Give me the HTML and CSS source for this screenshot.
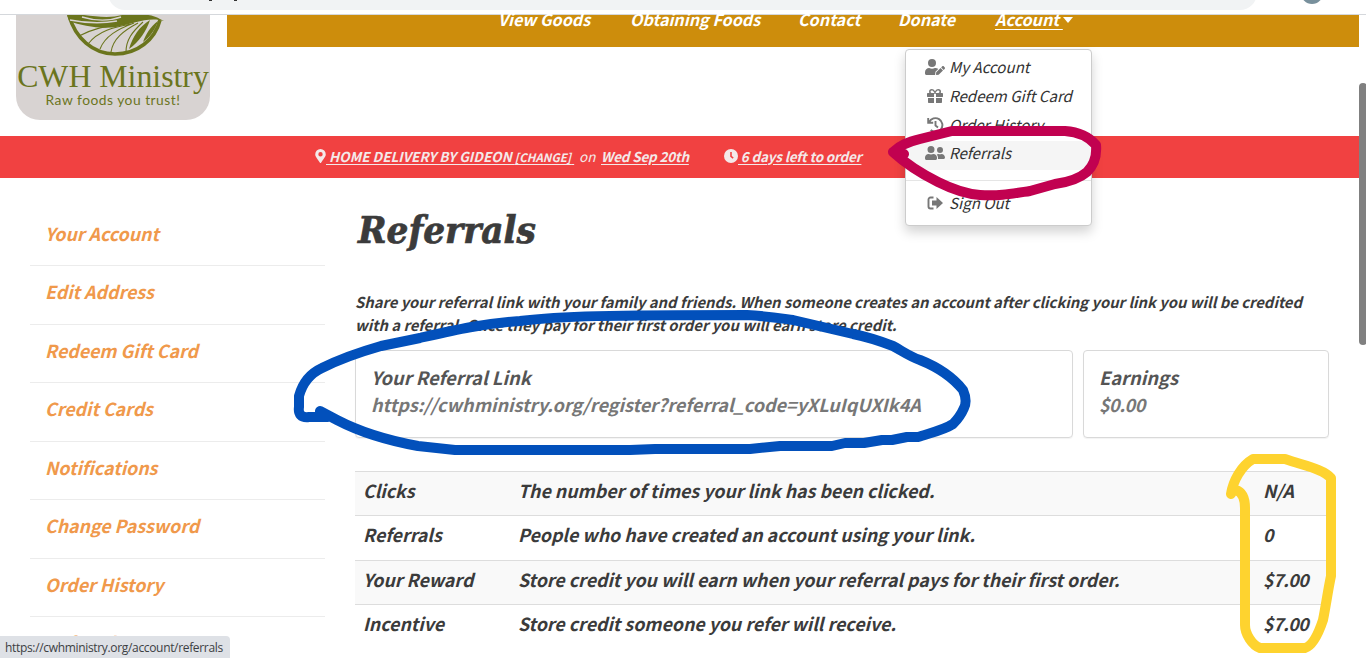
FILE: index.html
```html
<!DOCTYPE html>
<html lang="en">
<head>
  <meta charset="utf-8">
  <title>Referrals - CWH Ministry</title>
  <link rel="stylesheet" href="styles.css">
</head>
<body>
  <div class="browser-bar">
    <div class="address"><i></i><i></i></div>
    <div class="avatar"></div>
  </div>

  <header class="header">
    <div class="logo">
      <svg class="logo-mark" width="194" height="42" viewBox="0 0 194 42" fill="none" stroke="#6b751d">
        <path d="M53 0c6 23 24 39 46 39s40-14 45-34" stroke-width="3.6"/>
        <path d="M51 0h17c14 2 28 3 38 0h14c10-1 17 0 24 4l4 2-5-1c-14-2-27 4-43 7C84 14 66 11 53 6z" fill="#6b751d" stroke="none"/>
        <path d="M54 5c15 3 31 4 47 1M66 2c13 4 28 4 39 0" stroke="#d8d3d2" stroke-width="1.4"/>
        <path d="M63 21C79 12 96 11 110 8M72 29c10-13 26-17 43-20M84 34c5-13 18-20 34-26M95 37c2-13 12-21 27-29M110 37c0-12 6-20 17-30" stroke-width="1.1"/>
        <path d="M113 34c4-13 10-22 21-29-3 10-11 22-21 29zM127 27c3-8 7-15 15-21-3 9-8 16-15 21z" fill="#6b751d" stroke="none"/>
      </svg>
      <div class="logo-name">CWH Ministry</div>
      <div class="logo-tag">Raw foods you trust!</div>
    </div>
    <nav class="nav">
      <a class="nav-goods">View Goods</a>
      <a class="nav-foods">Obtaining Foods</a>
      <a class="nav-contact">Contact</a>
      <a class="nav-donate">Donate</a>
      <a class="nav-account"><u>Account </u><i class="caret"></i></a>
    </nav>
  </header>

  <div class="delivery">
    <svg class="pin" width="11" height="14" viewBox="0 0 384 512" fill="#f4e9e9"><path d="M172 502C27 291 0 270 0 192a192 192 0 0 1 384 0c0 78-27 99-172 310a24 24 0 0 1-40 0zM192 272a80 80 0 1 0 0-160 80 80 0 0 0 0 160z"/></svg>
    <a class="where">&nbsp;HOME DELIVERY BY GIDEON <small>[CHANGE]</small>&nbsp;</a>
    <span class="on">on</span>
    <a class="date">Wed Sep 20th</a>
    <svg class="clock" width="14" height="14" viewBox="0 0 16 16"><circle cx="8" cy="8" r="8" fill="#f4e9e9"/><path d="M8 3.5v5l2.5 2" fill="none" stroke="#f14141" stroke-width="1.8"/></svg>
    <a class="left">&nbsp;6 days left to order</a>
  </div>

  <div class="page">
    <aside class="sidebar">
      <a>Your Account</a>
      <a>Edit Address</a>
      <a>Redeem Gift Card</a>
      <a>Credit Cards</a>
      <a>Notifications</a>
      <a>Change Password</a>
      <a>Order History</a>
      <a>Referrals</a>
    </aside>

    <main class="main">
      <h1>Referrals</h1>
      <p class="intro">
        <span>Share your referral link with your family and friends. When someone creates an account after clicking your link you will be credited</span><br>
        <span>with a referral. Once they pay for their first order you will earn store credit.</span>
      </p>
      <div class="cards">
        <div class="card link-card">
          <h3>Your Referral Link</h3>
          <p>https://cwhministry.org/register?referral_code=yXLuIqUXIk4A</p>
        </div>
        <div class="card earnings-card">
          <h3>Earnings</h3>
          <p class="amount">$0.00</p>
        </div>
      </div>
      <div class="stats">
        <div class="row"><span>Clicks</span><span>The number of times your link has been clicked.</span><span>N/A</span></div>
        <div class="row"><span>Referrals</span><span>People who have created an account using your link.</span><span>0</span></div>
        <div class="row"><span>Your Reward</span><span>Store credit you will earn when your referral pays for their first order.</span><span class="amount">$7.00</span></div>
        <div class="row"><span>Incentive</span><span>Store credit someone you refer will receive.</span><span class="amount">$7.00</span></div>
      </div>
    </main>
  </div>

  <div class="dropdown">
    <a>
      <svg width="20" height="16" viewBox="0 0 640 512"><path d="M224 256a128 128 0 1 0 0-256 128 128 0 0 0 0 256zm89 32c-28 13-58 20-89 20s-61-7-89-20C60 288 0 348 0 422v42c0 26 22 48 48 48h275l12-102 90-90c-28-24-66-32-112-32zM359 425l-7 65c-1 12 8 21 20 20l65-7 139-139-79-79zM633 268l-41-41c-9-9-23-9-32 0l-42 42 79 79 36-37c9-9 9-33 0-43z"/></svg>
      <span>My Account</span>
    </a>
    <a>
      <svg width="20" height="16" viewBox="-64 0 640 512"><path fill-rule="evenodd" d="M32 448c0 18 14 32 32 32h160V320H32zm256 32h160c18 0 32-14 32-32V320H288zm192-320h-42c6-12 10-25 10-40a88 88 0 0 0-88-88c-42 0-69 21-103 69-34-48-61-69-103-69A88 88 0 0 0 66 120c0 15 4 28 10 40H32c-18 0-32 14-32 32v80c0 9 7 16 16 16h208V180h64v108h208c9 0 16-7 16-16v-80c0-18-14-32-32-32zm-326 0a40 40 0 0 1 0-80c22 0 38 4 86 80zm204 0h-86c48-76 64-80 86-80a40 40 0 0 1 0 80z"/></svg>
      <span>Redeem Gift Card</span>
    </a>
    <a>
      <svg class="line-icon" width="20" height="16" viewBox="-2 0 20 16"><path d="M1.200 1v4.800h5M2.200 5.200A6.900 6.900 0 1 1 3.700 13M8.500 4v4.500L11 10.500"/></svg>
      <span>Order History</span>
    </a>
    <a class="active">
      <svg width="20" height="16" viewBox="0 0 640 512"><path d="M192 256a112 112 0 1 0 0-224 112 112 0 0 0 0 224zm77 32c-48 20-106 20-154 0C52 288 0 340 0 403v29c0 26 22 48 48 48h288c26 0 48-22 48-48v-29c0-63-52-115-115-115zm211-32a96 96 0 1 0 0-192 96 96 0 0 0 0 192zm48 32c-34 12-62 12-96 0-20 0-39 6-55 16 24 27 39 61 39 99v45h176c26 0 48-22 48-48 0-62-50-112-112-112z"/></svg>
      <span>Referrals</span>
    </a>
    <hr>
    <a class="sign-out">
      <svg class="line-icon" width="20" height="16" viewBox="-2 0 20 16"><path d="M6.500 2.500H3.500a2 2 0 0 0-2 2v7a2 2 0 0 0 2 2h3"/><path class="arrow" d="M9.500 2 16 8l-6.500 6v-3.500H5v-5h4.500z"/></svg>
      <span>Sign Out</span>
    </a>
  </div>

  <!-- marker strokes drawn over the page -->
  <svg class="marks" width="1366" height="658" viewBox="0 0 1366 658">
    <path stroke="#c10150" d="M904 154 893 152C900 145 908 142 920 139L952 131H1065C1079 132 1090 138 1096 145 1097 156 1094 165 1087 172 1080 178 1070 182 1055 184L1030 191C1010 194 1000 196 980 195C966 194 950 188 938 182 920 173 905 163 893 152"/>
    <path stroke="#0250bb" d="M328 417H309C301 418 298 414 299 407V396C302 385 309 374 322 368C340 359 360 352 381 346L420 338C455 330 480 324 520 321 560 316 610 315 747 315C765 316 778 318 793 320L853 334C868 337 880 341 893 346 904 352 909 356 920 360 940 368 955 380 963 390 966 397 966 404 964 408 961 415 957 420 953 424 944 430 930 433 918 437H907L892 440H882L864 443H845L832 446H780L750 449H655L630 450H455L418 446C385 440 360 432 337 420L320 411"/>
    <path stroke="#fed32f" d="M1231 494C1233 481 1241 466 1253 459H1285C1305 466 1323 469 1331 478V576C1328 590 1326 605 1323 620 1318 635 1312 646 1305 648H1260C1252 645 1245 634 1245 625V508C1245 499 1242 492 1236 490"/>
  </svg>

  <div class="status">https://cwhministry.org/account/referrals</div>
  <div class="scrollbar"></div>
</body>
</html>
```

FILE: styles.css
```css
* {
  margin: 0;
  padding: 0;
  box-sizing: border-box;
}

body {
  position: relative;
  width: 1366px;
  height: 658px;
  overflow: hidden;
  background: #fff;
  color: #3b3b3b;
  font-family: "Noto Sans CJK SC", "Open Sans", sans-serif;
  font-style: italic;
  font-weight: 700;
  font-size: 17.8px;
}

a, span {
  white-space: nowrap;
}

.browser-bar {
  display: flex;
  height: 15px;
  padding-left: 108px;
  border-bottom: 1px solid #d5d8dc;
  overflow: hidden;
}

.address {
  display: flex;
  gap: 22px;
  width: 1149px;
  height: 34px;
  margin-top: -24px;
  padding: 24px 0 0 101px;
  border-radius: 17px;
  background: #f1f3f4;
}

.address i {
  width: 3px;
  height: 1px;
  background: #333;
}

.avatar {
  width: 22px;
  height: 22px;
  margin: -18px 0 0 44px;
  border-radius: 50%;
  background: #78909c;
}

.header {
  display: flex;
  height: 121px;
  padding-left: 16px;
}

.logo {
  width: 194px;
  height: 105px;
  margin-right: 17px;
  border-radius: 0 0 24px 24px;
  background: #d8d3d2;
  color: #6b751d;
  font-style: normal;
  font-weight: 400;
  text-align: center;
  white-space: nowrap;
}

.logo-mark {
  display: block;
}

.logo-name {
  font: 31.8px/39px "Liberation Serif", serif;
}

.logo-tag {
  font: 13.8px/7px Lato, sans-serif;
  letter-spacing: 0.5px;
}

.nav {
  display: flex;
  width: 1132px;
  height: 32px;
  padding-left: 271px;
  background: #cd8d0c;
  color: #fff;
  font-size: 16.2px;
  line-height: 8px;
}

.nav a {
  flex: none;
}

.nav-goods { width: 132px; }
.nav-foods { width: 168px; }
.nav-contact { width: 100px; }
.nav-donate { width: 97px; }

.nav u {
  white-space: pre;
  text-underline-offset: 3px;
}

.caret {
  display: inline-block;
  border: 5.5px solid transparent;
  border-top: 6px solid #fff;
  border-bottom: 0;
  vertical-align: 3px;
}

.delivery {
  display: flex;
  align-items: center;
  width: 1359px;
  height: 42px;
  padding: 0 0 3px 315px;
  background: #f14141;
  color: #f4e9e9;
  font-size: 13.5px;
}

.delivery svg {
  margin-top: 1px;
}

.delivery a {
  text-decoration: underline;
  text-underline-offset: 2px;
}

.delivery small {
  font-size: 11.5px;
}

.where { width: 249px; }
.on { width: 22px; margin-left: 4px; font-weight: 400; }
.date { width: 123px; letter-spacing: -0.2px; }
.left { letter-spacing: -0.2px; }

.page {
  display: flex;
  padding-left: 30px;
}

.sidebar {
  width: 295px;
  padding-top: 29.5px;
  margin-right: 30px;
  color: #f0994b;
}

.sidebar a {
  display: block;
  height: 58.5px;
  padding-left: 15px;
  border-bottom: 1px solid #ececec;
  line-height: 51px;
}

.main {
  width: 974px;
}

h1 {
  height: 112px;
  padding: 22px 0 0 3px;
  font: italic 700 38.2px/60px "DejaVu Serif Condensed", "DejaVu Serif", serif;
  -webkit-text-stroke: 0.7px #3b3b3b;
}

.intro {
  height: 60px;
  font-size: 14.8px;
  line-height: 23px;
}

.cards {
  display: flex;
  gap: 10px;
  margin-bottom: 33px;
}

.card {
  height: 88px;
  padding: 13px 15px;
  border: 1px solid #d9d9d9;
  border-radius: 4px;
  box-shadow: 0 1px 1px rgba(0, 0, 0, 0.05);
  font-size: 18px;
  line-height: 27px;
}

.link-card { width: 718px; }
.earnings-card { width: 246px; }

.card h3 {
  font-size: 18.3px;
  color: #555;
}

.card p {
  color: #777;
}

.amount {
  letter-spacing: -0.5px;
}

.row {
  display: grid;
  grid-template-columns: 155px 745px 1fr;
  height: 44.4px;
  padding-left: 8px;
  border-top: 1px solid #ddd;
  line-height: 36px;
}

.row:nth-child(odd) {
  background: #f9f9f9;
}

.dropdown {
  position: absolute;
  top: 49px;
  left: 905px;
  width: 187px;
  height: 177px;
  padding-top: 4.6px;
  border: 1px solid #ccc;
  border-radius: 4px;
  background: #fff;
  box-shadow: 0 6px 12px rgba(0, 0, 0, 0.175);
  color: #333;
  font-size: 15.1px;
  font-weight: 400;
}

.dropdown a {
  display: flex;
  align-items: center;
  gap: 4px;
  height: 28.8px;
  padding: 0 0 4px 19px;
  line-height: 24px;
}

.dropdown span {
  padding-bottom: 2px;
}

.dropdown svg {
  flex: none;
  fill: #777;
}

.dropdown .line-icon {
  fill: none;
  stroke: #777;
  stroke-width: 1.9;
}

.dropdown .arrow {
  fill: #777;
  stroke: none;
}

.dropdown .active {
  background: #f5f5f5;
}

.dropdown hr {
  height: 1px;
  margin: 10px 0 8px;
  border: 0;
  background: #e5e5e5;
}

.dropdown .sign-out {
  padding-bottom: 1px;
}

.marks {
  position: absolute;
  top: 0;
  left: 0;
  fill: none;
  stroke-width: 10;
  stroke-linecap: round;
  stroke-linejoin: round;
}

.status {
  position: absolute;
  bottom: 0;
  left: 0;
  width: 230px;
  height: 22px;
  padding-left: 5px;
  border-radius: 0 4px 0 0;
  background: #dee1e6;
  color: #3c4043;
  font: 12px/24px "Open Sans", sans-serif;
  letter-spacing: -0.33px;
}

.scrollbar {
  position: absolute;
  top: 83px;
  left: 1359px;
  width: 8px;
  height: 262px;
  border-radius: 4px;
  background: #808080;
}
```
